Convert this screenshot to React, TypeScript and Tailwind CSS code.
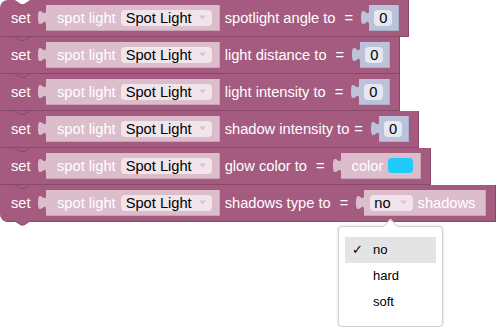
const font = { fontFamily: '"Liberation Sans", Arial, sans-serif' };

const Tab = ({ fill }: { fill: string }) => (
    <svg className="mt-[5px] shrink-0" width="8" height="15" viewBox="0 0 8 15">
        <path d="M8 0 C8 10 0 -8 0 7.5 S8 5 8 15 Z" fill={fill} />
    </svg>
);

const Arrow = () => (
    <svg className="ml-[7px] shrink-0" width="7" height="5" viewBox="0 0 7 5">
        <path d="M0 0.5 L7 0.5 L3.5 4.5 Z" fill="#d9c3cf" />
    </svg>
);

const SpotLight = () => (
    <div className="flex items-start h-[26px] shrink-0">
        <Tab fill="#dbbdcc" />
        <div className="flex items-center h-[26px] bg-[#dbbdcc] pl-[11px] pr-[7px] border-b border-r border-[#c7a3b5]">
            <span>spot light</span>
            <div className="ml-[5px] flex items-center h-[16px] rounded-[4px] bg-[#f1e5eb] pl-[5px] pr-[6px] text-black">
                <span>Spot Light</span>
                <Arrow />
            </div>
        </div>
    </div>
);

const NumberBlock = () => (
    <div className="ml-[8px] flex items-start h-[26px] shrink-0">
        <Tab fill="#bdc2db" />
        <div className="flex items-center h-[26px] bg-[#bdc2db] pl-[5px] pr-[6px] border-b border-r border-[#a9aecb]">
            <div className="flex items-center h-[16px] rounded-[4px] bg-[#e5e7f1] px-[5px] text-black">0</div>
        </div>
    </div>
);

const Notch = ({ first }: { first?: boolean }) =>
    first ? (
        <svg className="absolute top-0 left-[15px]" width="15" height="5" viewBox="0 0 15 5">
            <path d="M0 0 L6 4 L9 4 L15 0 Z" fill="#ffffff" />
        </svg>
    ) : (
        <svg className="absolute top-[-1px] left-[14px]" width="17" height="6" viewBox="0 0 17 6">
            <path d="M0 0.5 L7 4.5 L10 4.5 L17 0.5" fill="none" stroke="#87496a" strokeWidth="1" />
        </svg>
    );

const Row = ({ first, last, children }: { first?: boolean; last?: boolean; children: React.ReactNode }) => (
    <div
        className={
            "relative flex items-center h-[37px] w-max bg-[#a55b80] pl-[11px] pr-[9px] text-white whitespace-nowrap border-b border-r border-[#87496a] " +
            (first ? "rounded-tl-[8px] " : "") +
            (last ? "rounded-bl-[8px]" : "")
        }
    >
        <Notch first={first} />
        <span className="w-[27px] shrink-0">set</span>
        <SpotLight />
        {children}
        {last && (
            <svg className="absolute top-full left-[15px]" width="15" height="5" viewBox="0 0 15 5">
                <path d="M0 0 L6 4 L9 4 L15 0 Z" fill="#a55b80" />
                <path d="M0 0 L6 4 L9 4 L15 0" fill="none" stroke="#87496a" strokeWidth="1" />
            </svg>
        )}
    </div>
);

const App = () => {
    return (
        <div className="relative w-[499px] h-[327px] bg-white overflow-hidden text-[11pt] leading-[16px]" style={font}>
            <Row first>
                <span className="ml-[5px] whitespace-pre">spotlight angle to </span>
                <span className="ml-[5px]">=</span>
                <NumberBlock />
            </Row>
            <Row>
                <span className="ml-[5px] whitespace-pre">light distance to </span>
                <span className="ml-[5px]">=</span>
                <NumberBlock />
            </Row>
            <Row>
                <span className="ml-[5px] whitespace-pre">light intensity to </span>
                <span className="ml-[5px]">=</span>
                <NumberBlock />
            </Row>
            <Row>
                <span className="ml-[5px] whitespace-pre">shadow intensity to</span>
                <span className="ml-[5px]">=</span>
                <NumberBlock />
            </Row>
            <Row>
                <span className="ml-[5px] whitespace-pre">glow color to </span>
                <span className="ml-[5px]">=</span>
                <div className="ml-[8px] flex items-start h-[26px] shrink-0">
                    <Tab fill="#dbbdcc" />
                    <div className="flex items-center h-[26px] bg-[#dbbdcc] pl-[11px] pr-[7px] border-b border-r border-[#c7a3b5]">
                        <span>color</span>
                        <div className="ml-[5px] w-[25px] h-[15px] rounded-[4px] bg-[#1ecbfa]" />
                    </div>
                </div>
            </Row>
            <Row last>
                <span className="ml-[5px] whitespace-pre">shadows type to </span>
                <span className="ml-[5px]">=</span>
                <div className="ml-[8px] flex items-start h-[26px] shrink-0">
                    <Tab fill="#dbbdcc" />
                    <div className="flex items-center h-[26px] bg-[#dbbdcc] pl-[6px] pr-[10px] border-b border-r border-[#c7a3b5]">
                        <div className="flex items-center h-[16px] rounded-[4px] bg-[#f1e5eb] pl-[4px] pr-[6px] text-black">
                            <span>no</span>
                            <span className="ml-[2px]"><Arrow /></span>
                        </div>
                        <span className="ml-[5px]">shadows</span>
                    </div>
                </div>
            </Row>

            <div className="absolute left-[338px] top-[226px] w-[105px] h-[101px] bg-white border border-[#d0d0d0] rounded-[4px] shadow-[0_0_3px_rgba(0,0,0,0.15)] pt-[10px] px-[6px] text-[13px] text-black">
                <div className="absolute left-[46px] top-[-6px] w-[11px] h-[11px] rotate-45 bg-white border-t border-l border-[#d0d0d0]" />
                <div className="relative flex items-center h-[26px] bg-[#e4e4e4] pl-[7px]">
                    <span className="w-[21px]">✓</span>
                    <span>no</span>
                </div>
                <div className="relative flex items-center h-[26px] pl-[28px]">hard</div>
                <div className="relative flex items-center h-[26px] pl-[28px]">soft</div>
            </div>
        </div>
    );
};

export default App;
